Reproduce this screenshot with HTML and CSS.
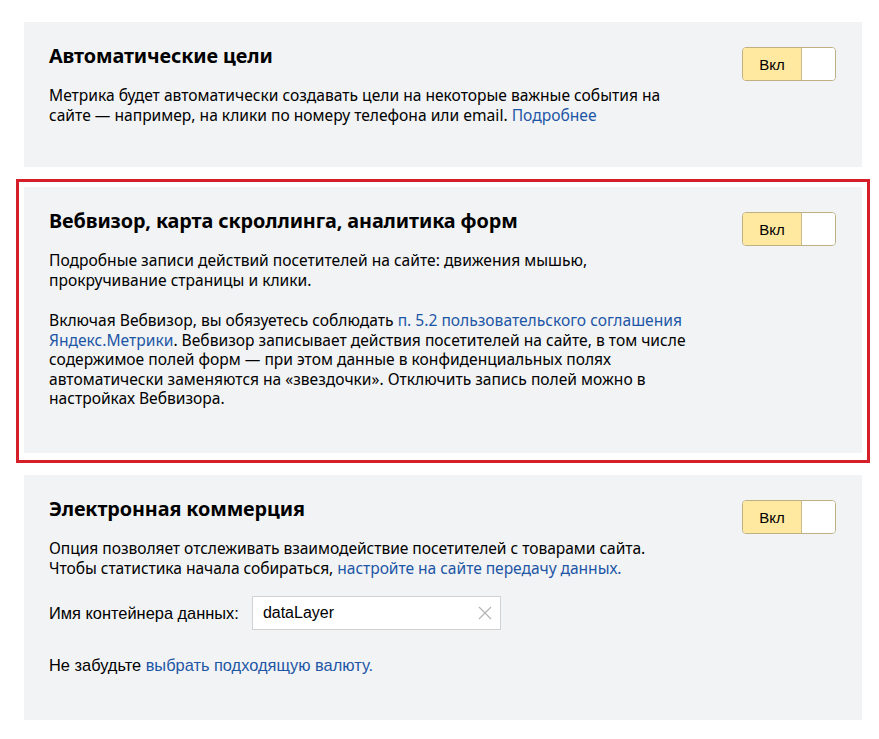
FILE: index.html
```html
<!DOCTYPE html>
<html lang="ru">
<head>
<meta charset="utf-8">
<title>Настройки счётчика</title>
<link rel="stylesheet" href="styles.css">
</head>
<body>
<main class="list">
  <section class="card card-goals">
    <div class="card-body">
      <h2 class="card-title">Автоматические цели</h2>
      <p class="card-text">Метрика будет автоматически создавать цели на некоторые важные события на сайте — например, на клики по номеру телефона или email. <a class="link" href="#">Подробнее</a></p>
    </div>
    <div class="tumbler"><span class="tumbler-label">Вкл</span><span class="tumbler-knob"></span></div>
  </section>

  <div class="highlight">
    <section class="card card-webvisor">
      <div class="card-body">
        <h2 class="card-title">Вебвизор, карта скроллинга, аналитика форм</h2>
        <p class="card-text">Подробные записи действий посетителей на сайте: движения мышью, прокручивание страницы и клики.</p>
        <p class="card-text card-text-spaced">Включая Вебвизор, вы обязуетесь соблюдать <a class="link" href="#">п. 5.2 пользовательского соглашения Яндекс.Метрики</a>. Вебвизор записывает действия посетителей на сайте, в том числе содержимое полей форм — при этом данные в конфиденциальных полях автоматически заменяются на «звездочки». Отключить запись полей можно в настройках Вебвизора.</p>
      </div>
      <div class="tumbler"><span class="tumbler-label">Вкл</span><span class="tumbler-knob"></span></div>
    </section>
  </div>

  <section class="card card-ecom">
    <div class="card-body">
      <h2 class="card-title">Электронная коммерция</h2>
      <p class="card-text card-text-narrow">Опция позволяет отслеживать взаимодействие посетителей с товарами сайта.<br>Чтобы статистика начала собираться, <a class="link" href="#">настройте на сайте передачу данных.</a></p>
      <div class="field-row">
        <span class="field-label">Имя контейнера данных:</span>
        <label class="input">
          <span class="input-value">dataLayer</span>
          <svg class="input-clear" width="14" height="14" viewBox="0 0 14 14"><path d="M1 1L13 13M13 1L1 13" stroke="#b3b3b3" stroke-width="1.2" fill="none"/></svg>
        </label>
      </div>
      <p class="note">Не забудьте <a class="link" href="#">выбрать подходящую валюту.</a></p>
    </div>
    <div class="tumbler"><span class="tumbler-label">Вкл</span><span class="tumbler-knob"></span></div>
  </section>

  <section class="card card-next"></section>
</main>
</body>
</html>
```

FILE: styles.css
```css
* { box-sizing: border-box; }

html, body {
  margin: 0;
  padding: 0;
  background: #ffffff;
}

body {
  font-family: "Noto Sans", "Open Sans", sans-serif;
  color: #000;
  overflow: hidden;
}

.list {
  display: flex;
  flex-direction: column;
  gap: 20px;
  width: 838px;
  margin: 22px 0 0 24px;
}

.card {
  display: flex;
  justify-content: space-between;
  align-items: flex-start;
  background: #f2f3f5;
  padding: 22px 26px 0 25px;
}

.card-goals { height: 145px; }
.card-webvisor { height: 266px; }
.card-ecom { height: 245px; }
.card-next { height: 40px; }

.highlight {
  margin: -8px -8px;
  border: 3px solid #d5202b;
  padding: 5px 5px 7px 5px;
}

.card-body {
  width: 650px;
}

.card-title {
  margin: 0;
  font-size: 19.8px;
  line-height: 24px;
  font-weight: 700;
  letter-spacing: -0.1px;
}

.card-text {
  margin: 18px 0 0;
  font-size: 15.6px;
  line-height: 19.5px;
}

.card-text-spaced { margin-top: 21px; }

.card-text-narrow {
  letter-spacing: -0.05px;
}

.link {
  color: #1d56a5;
  text-decoration: none;
}

.tumbler {
  display: flex;
  flex: none;
  width: 94px;
  height: 34px;
  margin-top: 3px;
  border: 1px solid #bfb084;
  border-radius: 4px;
  overflow: hidden;
  font-family: "Liberation Sans", Arial, sans-serif;
  font-size: 15px;
}

.tumbler-label {
  flex: 1;
  display: flex;
  align-items: center;
  justify-content: center;
  background: #ffe9a0;
  border-right: 1px solid #c9bb90;
}

.tumbler-knob {
  width: 33px;
  background: #fff;
}

.field-row {
  display: flex;
  align-items: center;
  gap: 13px;
  margin-top: 18px;
  font-family: "Liberation Sans", Arial, sans-serif;
}

.field-label {
  font-size: 16.4px;
}

.input {
  display: flex;
  align-items: center;
  justify-content: space-between;
  width: 249px;
  height: 34px;
  padding: 0 8px 0 10px;
  background: #fff;
  border: 1px solid #d2d2d2;
  font-size: 16px;
}

.note {
  margin: 25px 0 0;
  font-family: "Liberation Sans", Arial, sans-serif;
  font-size: 16.4px;
  line-height: 20px;
}
```
